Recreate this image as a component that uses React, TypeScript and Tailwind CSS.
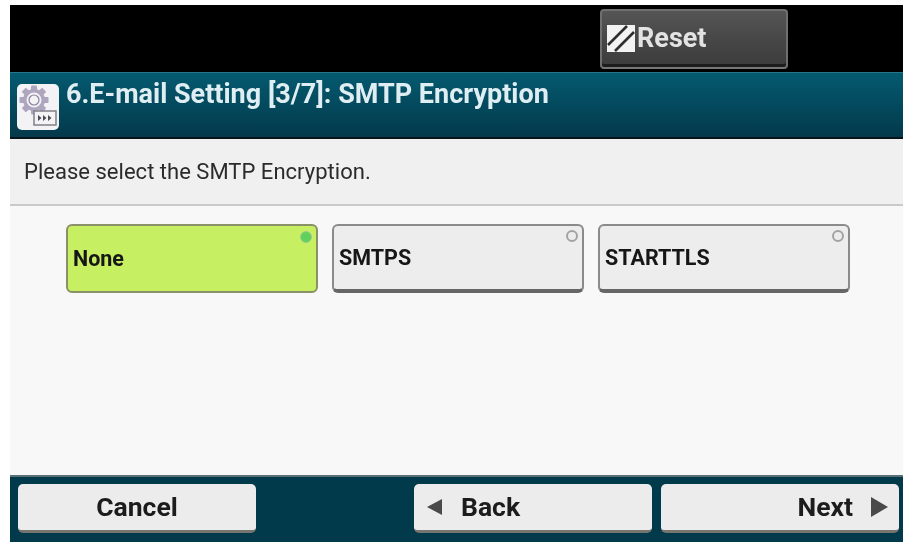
const font = { fontFamily: "Roboto, 'Liberation Sans', sans-serif" };

const GearIcon = () => (
  <div className="w-[42px] h-[46px] bg-[#f3f2f4] rounded-[5px] flex items-start justify-start pl-[2px] pt-[1px] shrink-0">
    <svg width="38" height="43" viewBox="0 0 38 43">
      <g fill="#aea6bf">
        <circle cx="15" cy="15" r="11" />
        <rect x="12" y="0.5" width="6" height="29" rx="1" />
        <rect x="0.5" y="12" width="29" height="6" rx="1" />
        <rect x="12" y="0.5" width="6" height="29" rx="1" transform="rotate(45 15 15)" />
        <rect x="12" y="0.5" width="6" height="29" rx="1" transform="rotate(-45 15 15)" />
      </g>
      <circle cx="15" cy="15" r="7.5" fill="#f3f2f4" />
      <circle cx="15" cy="15" r="5" fill="none" stroke="#8a82a0" strokeWidth="1.2" />
      <rect x="15" y="26" width="22" height="14" fill="#f3f2f4" stroke="#808086" strokeWidth="1.5" />
      <path d="M19 30l3.5 3-3.5 3zM24 30l3.5 3-3.5 3zM29 30l3.5 3-3.5 3z" fill="#4c4c55" />
    </svg>
  </div>
);

const ResetIcon = () => (
  <svg width="28" height="27" viewBox="0 0 28 27" className="shrink-0">
    <rect width="28" height="27" fill="#f2f2f2" />
    <path d="M1 20L20 1M8 26L27 7" stroke="#2e2e2e" strokeWidth="2.6" fill="none" />
  </svg>
);

const Choice = ({ label, selected }: { label: string; selected?: boolean }) => (
  <div
    className={
      selected
        ? "relative w-[252px] h-[69px] rounded-[6px] border-2 border-[#8a9168] bg-[#c6ef62] flex items-center pl-[5px] pt-[1px]"
        : "relative w-[252px] h-[69px] rounded-[6px] border-2 border-b-[4px] border-[#8b8b8b] border-b-[#666] bg-[#ededed] flex items-center pl-[5px] pt-[1px]"
    }
  >
    <span className="text-[21.5px] font-bold text-[#161616] leading-none">{label}</span>
    <span
      className={
        selected
          ? "absolute top-[5px] right-[4px] w-[12px] h-[12px] rounded-full bg-[#5fd05a] border border-[#9fc79a]"
          : "absolute top-[4px] right-[4px] w-[12px] h-[12px] rounded-full bg-[#ececec] border-[2px] border-[#a3a3a3]"
      }
    />
  </div>
);

const FooterButton = ({ className, children }: { className: string; children: React.ReactNode }) => (
  <div
    className={`h-[49px] rounded-[5px] bg-[#ececec] border-b-[3px] border-[#77756f] flex items-center text-[26.5px] font-bold text-[#1c1c1c] ${className}`}
  >
    {children}
  </div>
);

export default function App() {
  return (
    <div className="w-[903px] h-[542px] bg-white pl-[10px] pt-[5px] overflow-hidden" style={font}>
      <div className="h-[537px] flex flex-col blur-[0.5px]">
        <div className="h-[67px] bg-black flex justify-start pl-[590px] pt-[4px] shrink-0">
          <div className="w-[188px] h-[60px] rounded-[4px] border-2 border-[#6f6f6f] border-b-[#777] bg-gradient-to-b from-[#555] via-[#474747] to-[#3c3c3c] shadow-[inset_0_-3px_0_#1c1c1c] flex items-center pl-[5px] gap-[2px] pb-[1px]">
            <ResetIcon />
            <span className="text-[27px] font-bold text-[#e3e3e3] leading-none">Reset</span>
          </div>
        </div>

        <div className="h-[67px] shrink-0 bg-gradient-to-b from-[#045a70] to-[#03394b] border-t border-[#2a7488] border-b-[2px] border-b-[#04141a] flex items-start pl-[7px] pt-[6px] gap-[7px]">
          <div className="pt-[5px]">
            <GearIcon />
          </div>
          <span className="text-[27px] font-bold text-[#dfeef2] leading-[30px]">
            6.E-mail Setting [3/7]: SMTP Encryption
          </span>
        </div>

        <div className="h-[67px] shrink-0 bg-[#f0f0f0] border-b-2 border-[#c9c9c9] flex items-center pl-[14px]">
          <span className="text-[22px] tracking-[0.02px] text-[#2b2b2b] leading-none">Please select the SMTP Encryption.</span>
        </div>

        <div className="flex-1 bg-[#f8f8f8] flex justify-start gap-[14px] pl-[56px] pt-[18px]">
          <Choice label="None" selected />
          <Choice label="SMTPS" />
          <Choice label="STARTTLS" />
        </div>

        <div className="h-[67px] shrink-0 bg-[#003a4b] border-t-2 border-[#5b6f76] flex items-start pt-[7px] pl-[8px] pr-[4px]">
          <FooterButton className="w-[238px] justify-center">Cancel</FooterButton>
          <FooterButton className="w-[238px] ml-[158px] pl-[13px]">
            <span className="w-0 h-0 border-y-[8px] border-y-transparent border-r-[15px] border-r-[#4a4a4a]" />
            <span className="ml-[19px]">Back</span>
          </FooterButton>
          <FooterButton className="w-[238px] ml-[9px] justify-end pr-[11px]">
            <span>Next</span>
            <span className="ml-[18px] w-0 h-0 border-y-[10px] border-y-transparent border-l-[17px] border-l-[#4a4a4a]" />
          </FooterButton>
        </div>
      </div>
    </div>
  );
}
